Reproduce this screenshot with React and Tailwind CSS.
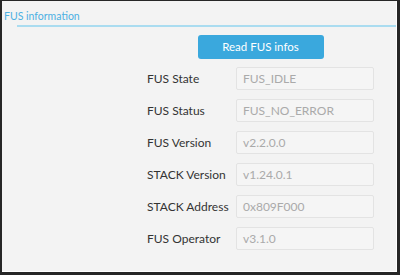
import React from "react";

const rows = [
  ["FUS State", "FUS_IDLE"],
  ["FUS Status", "FUS_NO_ERROR"],
  ["FUS Version", "v2.2.0.0"],
  ["STACK Version", "v1.24.0.1"],
  ["STACK Address", "0x809F000"],
  ["FUS Operator", "v3.1.0"],
];

export default function App() {
  return (
    <div className="w-[400px] h-[275px] bg-[#262626] pl-[2px] pt-px pr-[3px] pb-[3px] font-['Lato',sans-serif]">
      <div className="h-full bg-[#f3f3f3] border-r border-b border-white">
        {/* Section header */}
        <div className="pl-[2px] pt-[8px] text-[10.5px] leading-[15px] text-[#4cb0e2]">
          FUS information
        </div>
        <div className="ml-[15px] mt-[1px] h-[2px] bg-[#aadcf0]" />

        <div className="ml-[145px] w-[227px] mt-[8px] flex flex-col">
          <button
            type="button"
            className="self-center w-[126px] h-[24px] rounded-[3px] bg-[#3aa8dd] text-white text-[11.5px] leading-none"
          >
            Read FUS infos
          </button>

          <div className="mt-[8px] flex flex-col gap-[9px]">
            {rows.map(([label, value]) => (
              <div key={label} className="flex items-center h-[23px]">
                <span className="w-[89px] text-[12px] leading-[16px] text-[#333]">{label}</span>
                <div className="w-[138px] h-[23px] border border-[#e3e3e3] rounded-[2px] bg-[#f5f5f5] px-[6px] flex items-center text-[12px] text-[#aaa]">
                  {value}
                </div>
              </div>
            ))}
          </div>
        </div>
      </div>
    </div>
  );
}
